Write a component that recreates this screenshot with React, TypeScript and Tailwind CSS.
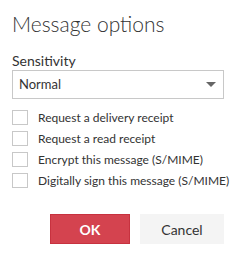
const options = [
  "Request a delivery receipt",
  "Request a read receipt",
  "Encrypt this message (S/MIME)",
  "Digitally sign this message (S/MIME)",
];

const App = () => {
  return (
    <div
      className="w-[243px] h-[256px] bg-white pl-3 pt-[11px] text-[#333333]"
      style={{ fontFamily: 'Lato, "Open Sans", sans-serif' }}
    >
      <h1 className="text-[21px] font-light leading-[26px] text-[#333333]">Message options</h1>

      <p className="mt-[16px] text-[14px] leading-[16px]">Sensitivity</p>

      <div className="mt-[1px] w-[212px] h-[29px] border border-[#c8c8c8] flex items-center justify-between pl-[6px] pr-[7px]">
        <span className="text-[13px]">Normal</span>
        <svg width="10" height="5" viewBox="0 0 10 5">
          <path d="M0 0h10L5 5z" fill="#666666" />
        </svg>
      </div>

      <div className="mt-[10px] flex flex-col gap-[5px]">
        {options.map((label) => (
          <label key={label} className="flex items-center gap-[10px] h-[16px]">
            <span className="w-[16px] h-[15px] border border-[#c8c8c8] bg-white shrink-0" />
            <span className="pt-[2px] text-[12px] leading-[16px] whitespace-nowrap">{label}</span>
          </label>
        ))}
      </div>

      <div className="mt-[26px] flex gap-[10px] pl-[38px]">
        <button className="w-[80px] h-[30px] bg-[#d4434f] border border-[#c7323f] text-white text-[14px] font-bold">
          OK
        </button>
        <button className="w-[84px] h-[30px] bg-[#f4f4f4] text-[#333333] text-[14px]">
          Cancel
        </button>
      </div>
    </div>
  );
};

export default App;
